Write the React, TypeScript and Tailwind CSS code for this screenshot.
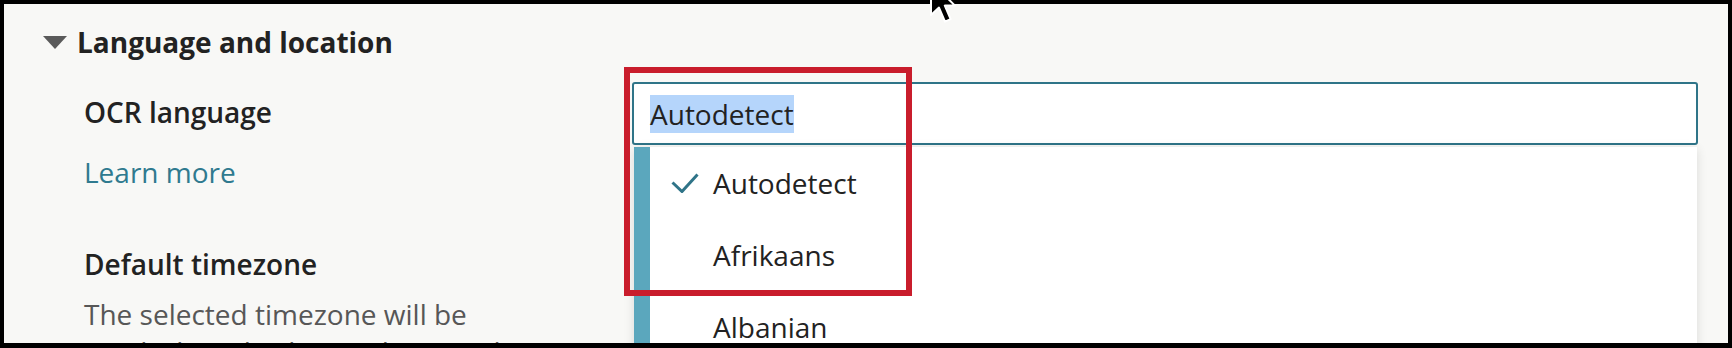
import { Fragment } from "react";

const options = ["Autodetect", "Afrikaans", "Albanian", "Amharic"];

// Small caret used by the collapsible section header
function Caret() {
  return (
    <svg width="24" height="13" viewBox="0 0 24 13" className="shrink-0">
      <path d="M0 0 H24 L12 13 Z" fill="#5a5a5a" />
    </svg>
  );
}

function Check() {
  return (
    <svg width="28" height="20" viewBox="0 0 28 20" className="shrink-0">
      <polyline points="1.5,9.5 11,18.5 26.5,1.5" fill="none" stroke="#2f7488" strokeWidth="3" />
    </svg>
  );
}

function Cursor() {
  return (
    <svg width="30" height="46" viewBox="0 0 15 23">
      <path
        d="M1 1 L1 17.5 L5 13.8 L8 20.8 L10.8 19.6 L7.9 12.8 L13 12.8 Z"
        fill="#000"
        stroke="#fff"
        strokeWidth="1"
        strokeLinejoin="round"
      />
    </svg>
  );
}

export default function App() {
  return (
    <div
      className="relative w-[1732px] h-[348px] bg-black pt-[4px] pl-[4px] pr-[4px] pb-[5px] overflow-hidden"
      style={{ fontFamily: '"Open Sans", "Noto Sans", sans-serif' }}
    >
      <div className="h-full bg-[#f8f8f6] overflow-hidden pl-[39px] pr-[30px] pt-[18px]">
        {/* Section header */}
        <div className="flex items-center gap-[10px] h-[40px]">
          <Caret />
          <h2 className="text-[28px] leading-[40px] font-bold text-[#222]">Language and location</h2>
        </div>

        {/* Section body */}
        <div className="grid grid-cols-[548px_1fr] pl-[41px] mt-[20px]">
          <div className="pt-[10px]">
            <div className="text-[28px] leading-[40px] font-semibold text-[#222]">OCR language</div>
            <a className="block mt-[20px] text-[28px] leading-[40px] text-[#2f7a8f]">Learn more</a>

            <div className="mt-[52px] text-[28px] leading-[40px] font-semibold text-[#222]">Default timezone</div>
            <p className="mt-[11px] text-[28px] leading-[38px] text-[#575757]">
              The selected timezone will be
              <br />
              used when displaying dates and times
            </p>
          </div>

          <div className="relative">
            {/* Combobox input */}
            <div className="h-[63px] flex items-center bg-white border-2 border-[#2f7488] rounded-[3px] pl-[16px]">
              <span className="text-[28px] leading-[38px] text-[#222] bg-[#b5d5fb]">Autodetect</span>
            </div>

            {/* Open listbox */}
            <div className="absolute top-[65px] left-[2px] right-[1px] bg-white border-l-[16px] border-[#5ba7bd] shadow-[0_2px_10px_rgba(0,0,0,0.12)]">
              {options.map((opt, i) => (
                <Fragment key={opt}>
                  <div className="flex items-center py-[17px] text-[28px] leading-[38px] text-[#222]">
                    <div className="w-[63px] pl-[21px] flex items-center">{i === 0 && <Check />}</div>
                    <span>{opt}</span>
                  </div>
                </Fragment>
              ))}
            </div>
          </div>
        </div>
      </div>

      {/* Annotation box */}
      <div className="absolute left-[624px] top-[67px] w-[288px] h-[229px] border-[6px] border-[#c91d2c]" />

      {/* Mouse pointer */}
      <div className="absolute left-[929px] top-[-20px] z-10">
        <Cursor />
      </div>
    </div>
  );
}
